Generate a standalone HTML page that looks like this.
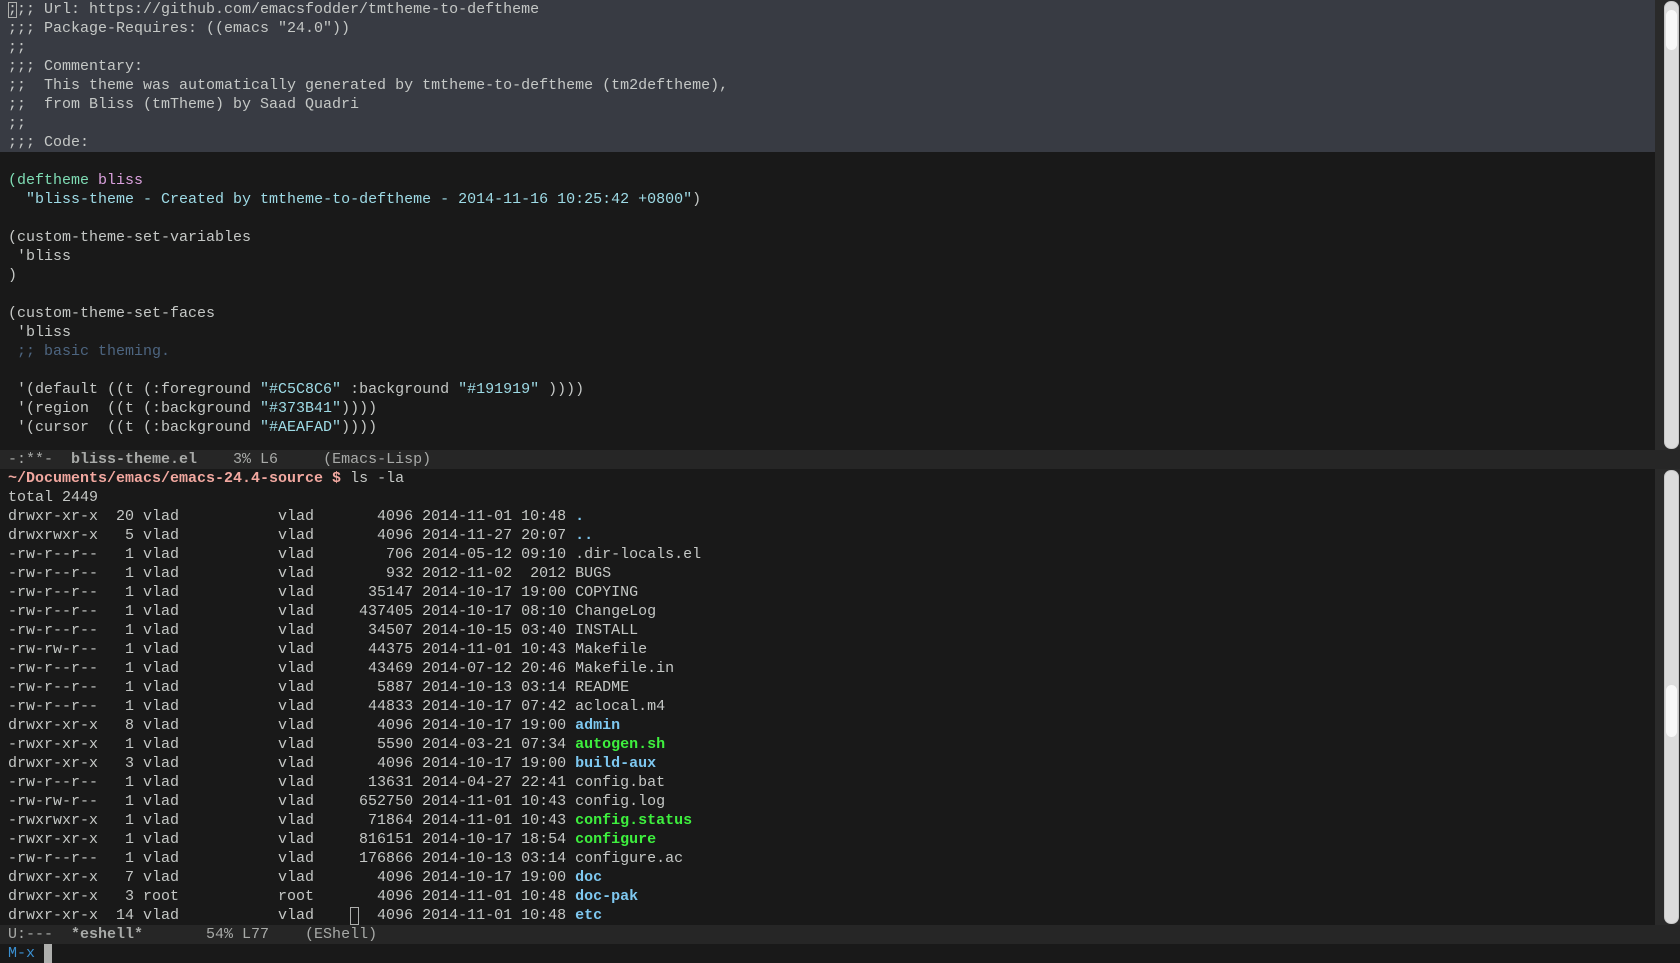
<!DOCTYPE html>
<html><head><meta charset="utf-8"><style>
body{margin:0;width:1680px;height:963px;background:#2a2a2a;overflow:hidden;font-family:"Liberation Mono",monospace;font-size:15px;color:#c5c8c6}
.w{position:absolute;left:0;width:1655px;background:#191919;overflow:hidden}
.l{height:19px;line-height:19px;white-space:pre;padding-left:8px;position:relative}
.hl{background:#383b43}
.ml{position:absolute;left:0;width:1680px;height:19px;line-height:19px;background:#262626;white-space:pre;padding-left:8px;box-sizing:border-box;color:#a8aaa8}
.sb{position:absolute;left:1664px;width:15px;background:#dcdcdc;border-radius:7px;border:1px solid #c8c8c8;box-sizing:border-box}
.th{position:absolute;left:1px;width:11px;background:#f8f8f8;border-radius:6px}
b{font-weight:bold}
.k{color:#7fdcb4}.p{color:#d9a0dc}.s{color:#9edbe6}.c{color:#4d6580}
.d{color:#7ec8f0;font-weight:bold}.x{color:#3ef03e;font-weight:bold}
.pr{color:#f2a8a0;font-weight:bold}
.cur{position:absolute;border:1px solid #aeafad;box-sizing:border-box}
</style></head><body>
<div class="w" style="top:0;height:450px">
<div class="l hl"><span class="cur" style="width:9px;height:16px;left:8px;top:2px"></span>;;; Url: https://github.com/emacsfodder/tmtheme-to-deftheme</div>
<div class="l hl">;;; Package-Requires: ((emacs "24.0"))</div>
<div class="l hl">;;</div>
<div class="l hl">;;; Commentary:</div>
<div class="l hl">;;  This theme was automatically generated by tmtheme-to-deftheme (tm2deftheme),</div>
<div class="l hl">;;  from Bliss (tmTheme) by Saad Quadri</div>
<div class="l hl">;;</div>
<div class="l hl">;;; Code:</div>
<div class="l"> </div>
<div class="l"><span class="k">(deftheme</span> <span class="p">bliss</span></div>
<div class="l">  <span class="s">"bliss-theme - Created by tmtheme-to-deftheme - 2014-11-16 10:25:42 +0800"</span>)</div>
<div class="l"> </div>
<div class="l">(custom-theme-set-variables</div>
<div class="l"> 'bliss</div>
<div class="l">)</div>
<div class="l"> </div>
<div class="l">(custom-theme-set-faces</div>
<div class="l"> 'bliss</div>
<div class="l"> <span class="c">;; basic theming.</span></div>
<div class="l"> </div>
<div class="l"> '(default ((t (:foreground <span class="s">"#C5C8C6"</span> :background <span class="s">"#191919"</span> ))))</div>
<div class="l"> '(region  ((t (:background <span class="s">"#373B41"</span>))))</div>
<div class="l"> '(cursor  ((t (:background <span class="s">"#AEAFAD"</span>))))</div>
</div>
<div class="sb" style="top:1px;height:448px"><div class="th" style="top:8px;height:40px"></div></div>
<div class="ml" style="top:450px">-:**-  <b>bliss-theme.el</b>    3% L6     (Emacs-Lisp)</div>
<div class="w" style="top:469px;height:456px">
<div class="l"><span class="pr">~/Documents/emacs/emacs-24.4-source $</span> ls -la</div>
<div class="l">total 2449</div>
<div class="l">drwxr-xr-x  20 vlad           vlad       4096 2014-11-01 10:48 <span class="d">.</span></div>
<div class="l">drwxrwxr-x   5 vlad           vlad       4096 2014-11-27 20:07 <span class="d">..</span></div>
<div class="l">-rw-r--r--   1 vlad           vlad        706 2014-05-12 09:10 .dir-locals.el</div>
<div class="l">-rw-r--r--   1 vlad           vlad        932 2012-11-02  2012 BUGS</div>
<div class="l">-rw-r--r--   1 vlad           vlad      35147 2014-10-17 19:00 COPYING</div>
<div class="l">-rw-r--r--   1 vlad           vlad     437405 2014-10-17 08:10 ChangeLog</div>
<div class="l">-rw-r--r--   1 vlad           vlad      34507 2014-10-15 03:40 INSTALL</div>
<div class="l">-rw-rw-r--   1 vlad           vlad      44375 2014-11-01 10:43 Makefile</div>
<div class="l">-rw-r--r--   1 vlad           vlad      43469 2014-07-12 20:46 Makefile.in</div>
<div class="l">-rw-r--r--   1 vlad           vlad       5887 2014-10-13 03:14 README</div>
<div class="l">-rw-r--r--   1 vlad           vlad      44833 2014-10-17 07:42 aclocal.m4</div>
<div class="l">drwxr-xr-x   8 vlad           vlad       4096 2014-10-17 19:00 <span class="d">admin</span></div>
<div class="l">-rwxr-xr-x   1 vlad           vlad       5590 2014-03-21 07:34 <span class="x">autogen.sh</span></div>
<div class="l">drwxr-xr-x   3 vlad           vlad       4096 2014-10-17 19:00 <span class="d">build-aux</span></div>
<div class="l">-rw-r--r--   1 vlad           vlad      13631 2014-04-27 22:41 config.bat</div>
<div class="l">-rw-rw-r--   1 vlad           vlad     652750 2014-11-01 10:43 config.log</div>
<div class="l">-rwxrwxr-x   1 vlad           vlad      71864 2014-11-01 10:43 <span class="x">config.status</span></div>
<div class="l">-rwxr-xr-x   1 vlad           vlad     816151 2014-10-17 18:54 <span class="x">configure</span></div>
<div class="l">-rw-r--r--   1 vlad           vlad     176866 2014-10-13 03:14 configure.ac</div>
<div class="l">drwxr-xr-x   7 vlad           vlad       4096 2014-10-17 19:00 <span class="d">doc</span></div>
<div class="l">drwxr-xr-x   3 root           root       4096 2014-11-01 10:48 <span class="d">doc-pak</span></div>
<div class="l"><span class="cur" style="width:9px;height:18px;left:350px;top:1px"></span>drwxr-xr-x  14 vlad           vlad       4096 2014-11-01 10:48 <span class="d">etc</span></div>
</div>
<div class="sb" style="top:470px;height:454px"><div class="th" style="top:214px;height:52px"></div></div>
<div class="ml" style="top:925px">U:---  <b>*eshell*</b>       54% L77    (EShell)</div>
<div class="w" style="top:944px;height:19px;width:1680px"><div class="l"><span style="color:#3a8fd0">M-x</span> <span style="display:inline-block;width:8px;height:19px;background:#aeafad;vertical-align:top"></span></div></div>
</body></html>
